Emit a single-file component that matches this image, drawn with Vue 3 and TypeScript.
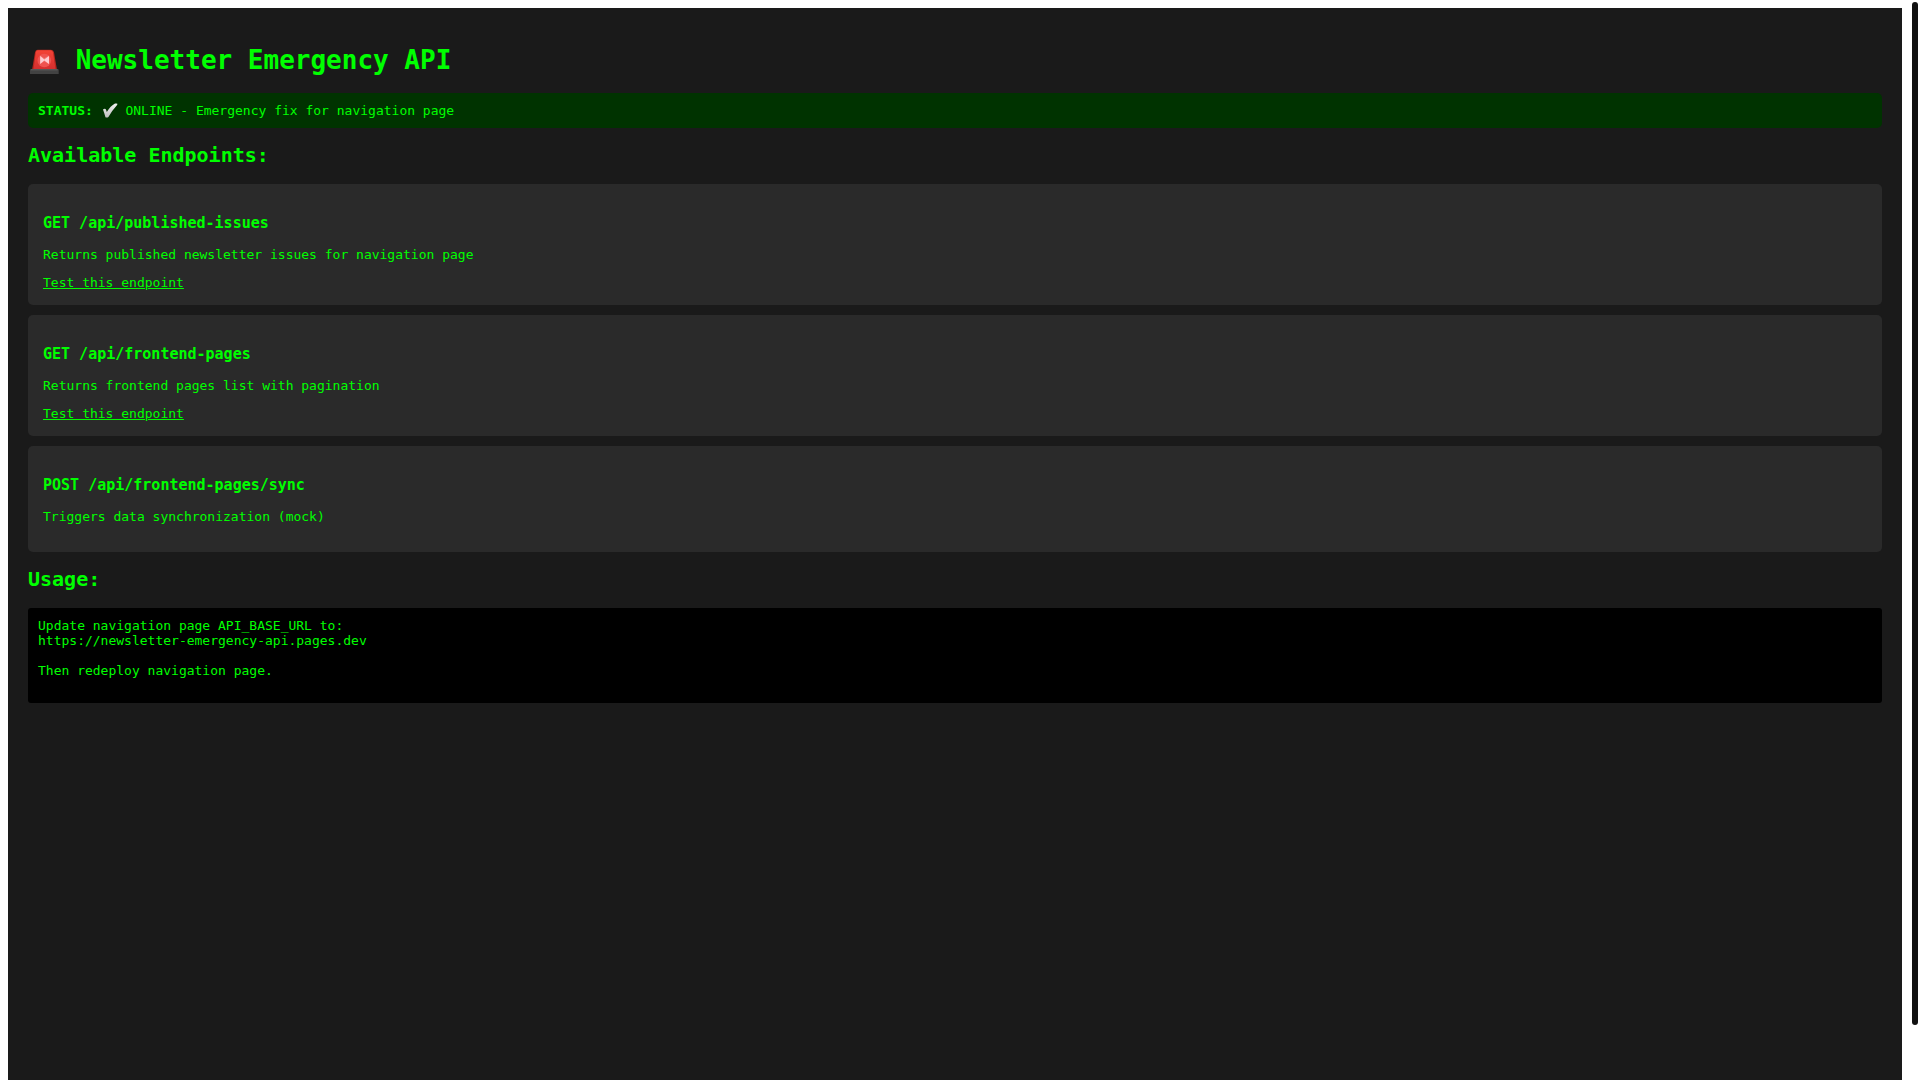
<script setup lang="ts">
interface Endpoint {
  method: string
  path: string
  description: string
  testable: boolean
}

const endpoints: Endpoint[] = [
  { method: 'GET', path: '/api/published-issues', description: 'Returns published newsletter issues for navigation page', testable: true },
  { method: 'GET', path: '/api/frontend-pages', description: 'Returns frontend pages list with pagination', testable: true },
  { method: 'POST', path: '/api/frontend-pages/sync', description: 'Triggers data synchronization (mock)', testable: false },
]

const usage = `Update navigation page API_BASE_URL to:
https://newsletter-emergency-api.pages.dev

Then redeploy navigation page.
        `
</script>

<template>
  <div class="viewport">
    <main class="page">
      <h1>
        <svg class="siren" viewBox="0 0 32 26" aria-hidden="true">
          <defs>
            <linearGradient id="dome" x1="0" y1="0" x2="0" y2="1">
              <stop offset="0" stop-color="#f44336" />
              <stop offset="1" stop-color="#d32f2f" />
            </linearGradient>
          </defs>
          <path d="M9.500 .8h13.500q2.500 0 3 2.500l3 17.700H4l3-17.700q.4-2.500 2.500-2.500z" fill="#b3261e" />
          <path d="M10 1.200h12.500q2 0 2.500 2.200L27.500 20.500H5.500L7.800 3.400q.3-2.200 2.200-2.200z" fill="url(#dome)" />
          <circle cx="16.300" cy="11.500" r="6.800" fill="#ef5350" />
          <path d="M12 6.500l4.300 2.800 4.500-2.800v8.500l-4.500-2.800-4.300 2.800z" fill="#f48a85" opacity=".6" />
          <path d="M12.200 7l4.100 3.500L21 7v8l-4.700-3.500-4.100 3.500z" fill="#ffcdd2" />
          <path d="M3 20h26.500q1.200 0 1.200 1v4H2v-4q0-1 1-1z" fill="#424242" />
          <path d="M3 20.300h26.500v1H3z" fill="#616161" />
        </svg>
        Newsletter Emergency API
      </h1>
      <div class="status">
        <strong>STATUS:</strong>{{ ' ' }}
        <svg class="check" viewBox="0 0 17 15" aria-hidden="true">
          <defs>
            <linearGradient id="tick" x1="0" y1="0" x2="0" y2="1">
              <stop offset="0" stop-color="#f2f2f2" />
              <stop offset="1" stop-color="#bdbdbd" />
            </linearGradient>
          </defs>
          <path d="M2 6.500q1.500-1.200 2.600-.4.700.8 1.200 3Q9.500 3 14 .6q1.800-.5 2.400.2.200.6-.7 1.600Q11 7.500 7.400 14q-.8.700-2 .6-.8 0-1.100-.9Q3.300 10 2 6.500z" fill="url(#tick)" />
        </svg>
        ONLINE - Emergency fix for navigation page
      </div>
      <h2>Available Endpoints:</h2>
      <section v-for="e in endpoints" :key="e.path" class="endpoint">
        <h3>{{ e.method }} {{ e.path }}</h3>
        <p>{{ e.description }}</p>
        <a v-if="e.testable" :href="e.path">Test this endpoint</a>
      </section>
      <h2>Usage:</h2>
      <pre>{{ usage }}</pre>
    </main>
    <div class="scrollbar"></div>
  </div>
</template>

<style scoped>
.viewport {
  position: relative;
  height: 100vh;
  overflow: hidden;
  box-sizing: border-box;
  padding: 8px 18px 0 8px;
  background: #fff;
}
.page {
  min-height: 100vh;
  box-sizing: border-box;
  display: flow-root;
  padding: 20px;
  background: #1a1a1a;
  color: #0f0;
  font-family: "DejaVu Sans Mono", monospace;
  font-size: 13px;
}
h1 { font-size: 26px; line-height: 30px; margin: 17px 0 18px; }
h2 { font-size: 20px; line-height: 23px; margin: 16px 0 17px; }
h3 { font-size: 15px; margin: 15px 0; }
p { margin: 13px 0; }
.siren {
  width: 32px;
  height: 26px;
  vertical-align: -6px;
}
.check {
  width: 17px;
  height: 15px;
  vertical-align: -3px;
}
.status {
  padding: 10px;
  border-radius: 5px;
  background: #003300;
}
.endpoint {
  display: flow-root;
  margin: 10px 0;
  padding: 15px;
  border-radius: 5px;
  background: #2a2a2a;
}
a { color: #0f0; }
pre {
  margin: 13px 0;
  padding: 10px;
  border-radius: 3px;
  background: #000;
  font-family: inherit;
}
.scrollbar {
  position: absolute;
  top: 2px;
  right: 2px;
  width: 6px;
  height: calc(100vh - 57px);
  border-radius: 3px;
  background: #111;
}
</style>
